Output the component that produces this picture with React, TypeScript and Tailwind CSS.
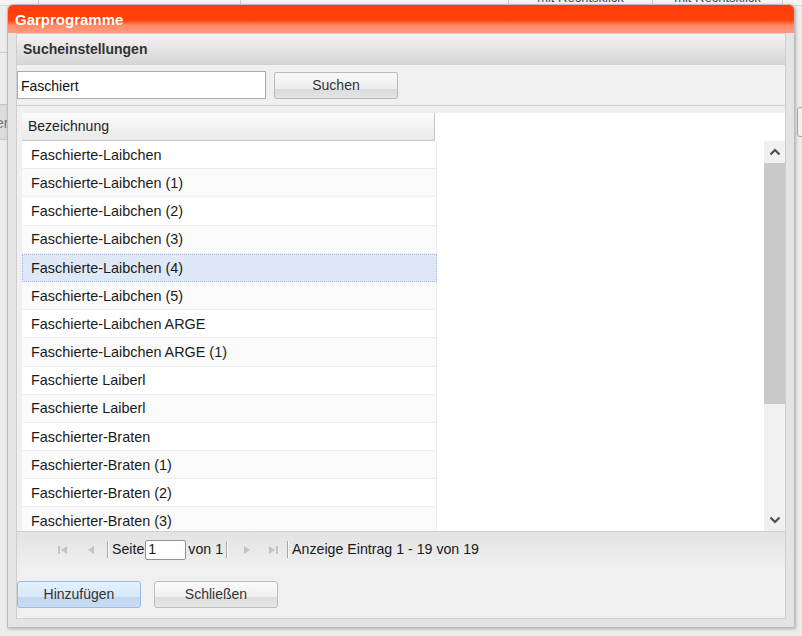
import React from "react";

const rows = [
  "Faschierte-Laibchen",
  "Faschierte-Laibchen (1)",
  "Faschierte-Laibchen (2)",
  "Faschierte-Laibchen (3)",
  "Faschierte-Laibchen (4)",
  "Faschierte-Laibchen (5)",
  "Faschierte-Laibchen ARGE",
  "Faschierte-Laibchen ARGE (1)",
  "Faschierte Laiberl",
  "Faschierte Laiberl",
  "Faschierter-Braten",
  "Faschierter-Braten (1)",
  "Faschierter-Braten (2)",
  "Faschierter-Braten (3)",
];

const font = { fontFamily: '"Liberation Sans", Arial, sans-serif' };

function Chevron({ down }: { down?: boolean }) {
  return (
    <svg width="12" height="8" viewBox="0 0 12 8" className={down ? "rotate-180" : ""}>
      <path d="M1.5 6.5 L6 2 L10.5 6.5" fill="none" stroke="#505050" strokeWidth="2.2" />
    </svg>
  );
}

function PagerIcon({ kind }: { kind: "first" | "prev" | "next" | "last" }) {
  const c = "#c4c4c4";
  return (
    <svg width="12" height="12" viewBox="0 0 12 12">
      {kind === "first" && (<><rect x="1" y="2" width="2" height="8" fill={c} /><path d="M10 2 L4 6 L10 10 Z" fill={c} /></>)}
      {kind === "prev" && <path d="M9 2 L3 6 L9 10 Z" fill={c} />}
      {kind === "next" && <path d="M3 2 L9 6 L3 10 Z" fill={c} />}
      {kind === "last" && (<><path d="M2 2 L8 6 L2 10 Z" fill={c} /><rect x="9" y="2" width="2" height="8" fill={c} /></>)}
    </svg>
  );
}

function Sep() {
  return <div className="w-px h-[17px] bg-[#a8a8a8] border-r border-white box-content" />;
}

export default function App() {
  return (
    <div className="relative w-[802px] h-[636px] overflow-hidden bg-[#ececec]" style={font}>
      {/* page behind the window */}
      <div className="absolute left-0 top-0 w-[802px] h-[6px] bg-[#f4f4f4] border-b border-[#d8d8d8] overflow-hidden">
        <div className="absolute left-[508px] top-[-12px] w-[145px] h-[20px] border-x border-[#d0d0d0] text-center text-[13px] text-[#444]">mit Rechtsklick</div>
        <div className="absolute left-[653px] top-[-12px] w-[130px] h-[20px] border-r border-[#d0d0d0] text-center text-[13px] text-[#444]">mit Rechtsklick</div>
        <div className="absolute left-[38px] top-0 w-px h-[6px] bg-[#d0d0d0]" />
        <div className="absolute left-[240px] top-0 w-px h-[6px] bg-[#d0d0d0]" />
      </div>
      <div className="absolute left-0 top-[52px] w-[7px] h-px bg-[#c8c8c8]" />
      <div className="absolute left-0 top-[104px] w-[7px] h-[36px] bg-[#dcdcdc] border-y border-[#c4c4c4] overflow-hidden">
        <span className="absolute left-[-4px] top-[8px] text-[14px] text-[#777]">er</span>
      </div>
      <div className="absolute left-[797px] top-[107px] w-[10px] h-[30px] rounded-[3px] border border-[#a8a8a8] bg-[#f0f0f0]" />

      {/* window */}
      <div className="absolute left-[7px] top-[4px] w-[788px] h-[624px] flex flex-col rounded-t-[6px] border border-[#bdbdbd] bg-[#e4e4e4] shadow-[1px_1px_3px_rgba(0,0,0,0.25)]">
        <div className="h-[28px] shrink-0 rounded-t-[5px] flex items-center pl-[7px] bg-[linear-gradient(to_bottom,#ff3e08_0%,#ff420c_55%,#ff8a68_72%,#ff9b80_100%)]">
          <span className="text-white font-bold text-[15px] leading-none">Garprogramme</span>
        </div>
        <div className="flex-1 px-[8px] pb-[8px]">
          <div className="h-[586px] flex flex-col border border-[#cfcfcf] bg-[#f0f0f0]">
            <div className="h-[31px] shrink-0 flex items-center pl-[6px] border-b border-[#d2d2d2] bg-[linear-gradient(to_bottom,#f3f3f3,#d6d6d6)]">
              <span className="font-bold text-[14px] text-[#333]">Sucheinstellungen</span>
            </div>
            <div className="h-[41px] shrink-0 flex items-start pt-[6px] border-b border-[#cfcfcf]">
              <div className="w-[249px] h-[28px] bg-white border border-[#a9a9b9] flex items-center pl-[3px] pt-[2px] text-[14px] text-[#111]">Faschiert</div>
              <div className="ml-[8px] mt-[1px] w-[124px] h-[27px] rounded-[2px] border border-[#b9b9b9] flex items-center justify-center text-[14px] text-[#333] bg-[linear-gradient(to_bottom,#f8f8f8_0%,#ececec_65%,#dcdcdc_66%,#e4e4e4_100%)]">Suchen</div>
            </div>

            {/* grid */}
            <div className="h-[425px] shrink-0 pl-[5px] pt-[7px] bg-[#f0f0f0]">
              <div className="h-full bg-white flex flex-col">
                <div className="h-[28px] shrink-0 flex">
                  <div className="w-[413px] h-full flex items-center pl-[6px] text-[14px] text-[#222] border-r border-b border-[#c5c5c5] bg-[linear-gradient(to_bottom,#fbfbfb,#e9e9e9)]">Bezeichnung</div>
                </div>
                <div className="flex-1 flex overflow-hidden">
                  <div className="w-[415px] flex flex-col overflow-hidden">
                    {rows.map((r, i) => (
                      <div
                        key={i}
                        className={
                          "h-[28.2px] shrink-0 flex items-center pt-[2px] text-[14.4px] text-[#1a1a1a] " +
                          (i === 4
                            ? "pl-[8px] bg-[#dfe8f6] border border-dotted border-[#a3bae9]"
                            : (i % 2 === 1 ? "pl-[9px] bg-[#fafafa] " : "pl-[9px] bg-white ") + "border-b border-r border-[#ededed]")
                        }
                      >
                        {r}
                      </div>
                    ))}
                  </div>
                  <div className="flex-1" />
                  <div className="w-[21px] flex flex-col bg-[#f0f0f0]">
                    <div className="h-[22px] flex items-center justify-center"><Chevron /></div>
                    <div className="h-[241px] bg-[#c9c9c9]" />
                    <div className="flex-1" />
                    <div className="h-[22px] flex items-center justify-center"><Chevron down /></div>
                  </div>
                </div>
              </div>
            </div>

            {/* pager */}
            <div className="h-[36px] shrink-0 flex items-center border-t border-[#cfcfcf] bg-[linear-gradient(to_bottom,#e3e3e3,#efefef)] text-[14.2px] text-[#1a1a1a]">
              <div className="ml-[40px]"><PagerIcon kind="first" /></div>
              <div className="ml-[16px]"><PagerIcon kind="prev" /></div>
              <div className="ml-[10px]"><Sep /></div>
              <span className="ml-[3px]">Seite</span>
              <div className="ml-[1px] w-[41px] h-[20px] bg-white border border-[#8f8f9f] rounded-[2px] flex items-center pl-[2px]">1</div>
              <span className="ml-[2px]">von 1</span>
              <div className="ml-[3px]"><Sep /></div>
              <div className="ml-[13px]"><PagerIcon kind="next" /></div>
              <div className="ml-[14px]"><PagerIcon kind="last" /></div>
              <div className="ml-[8px]"><Sep /></div>
              <span className="ml-[3px]">Anzeige Eintrag 1 - 19 von 19</span>
            </div>

            {/* footer */}
            <div className="flex-1 flex items-start pt-[14px] gap-[13px]">
              <div className="w-[124px] h-[27px] rounded-[3px] border border-[#9dbbe0] flex items-center justify-center text-[14px] text-[#333] bg-[linear-gradient(to_bottom,#e4f1fd_0%,#d6e8fa_60%,#c2d8f0_61%,#c8dcf2_100%)]">Hinzufügen</div>
              <div className="w-[124px] h-[27px] rounded-[3px] border border-[#bcbcbc] flex items-center justify-center text-[14px] text-[#333] bg-[linear-gradient(to_bottom,#fafafa_0%,#f0f0f0_60%,#dedede_61%,#e6e6e6_100%)]">Schließen</div>
            </div>
          </div>
        </div>
      </div>
    </div>
  );
}
